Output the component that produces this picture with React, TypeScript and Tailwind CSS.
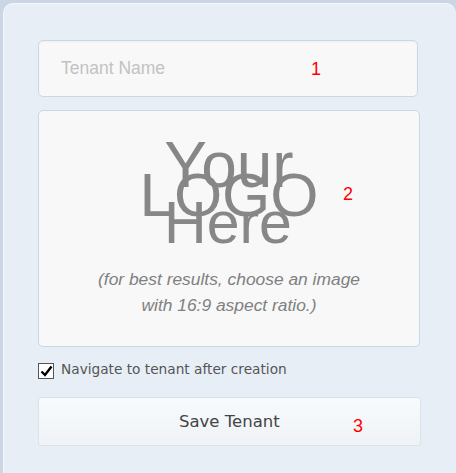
export default function App() {
  return (
    <div className="w-[456px] h-[473px] bg-[#cbd6e5] pt-[3px] pl-[3px] flex overflow-hidden">
      <div className="flex-1 rounded-t-[10px] bg-[#e7eef6] border-l border-t border-[#f4f7fb] pl-[34px] pt-[36px] flex flex-col">
        {/* Tenant name */}
        <div className="relative w-[380px] h-[57px] rounded-[5px] border border-[#c9d8e5] bg-[#f8f8f8] shadow-[inset_0_1px_2px_rgba(0,0,0,0.04)] flex items-center pl-[22px]">
          <span className="text-[17.5px] text-[#c2c2c2] font-['Liberation_Sans',Arial,sans-serif]">Tenant Name</span>
          <span className="absolute left-[272px] top-[15px] text-[18px] text-[#ff0000] font-['Liberation_Sans',Arial,sans-serif]">1</span>
        </div>

        {/* Logo */}
        <div className="relative mt-[13px] w-[382px] h-[237px] rounded-[5px] border border-[#c9d8e5] bg-[#f8f8f8] flex flex-col items-center">
          <div className="mt-[29px] flex flex-col items-center text-[#878787] font-['Liberation_Sans',Arial,sans-serif]">
            <span className="text-[64px] h-[30px] leading-[30px] mt-[10px]">Your</span>
            <span className="text-[62px] h-[30px] leading-[30px]">LOGO</span>
            <span className="text-[59px] h-[30px] leading-[30px] mt-[-2px] ml-[-2px]">Here</span>
          </div>
          <p className="mt-[28px] text-center text-[17.4px] italic leading-[26px] text-[#808080] font-['Liberation_Sans',Arial,sans-serif]">
            (for best results, choose an image
            <br />
            with 16:9 aspect ratio.)
          </p>
          <span className="absolute left-[304px] top-[70px] text-[18px] text-[#ff0000] font-['Liberation_Sans',Arial,sans-serif]">2</span>
        </div>

        {/* Navigate checkbox */}
        <label className="mt-[14px] flex items-start gap-[7px]">
          <span className="mt-[2px] w-[16px] h-[16px] border border-[#555] bg-white flex items-center justify-center">
            <svg width="13" height="12" viewBox="0 0 13 12">
              <path d="M1.5 6.5 L5 10 L11.5 1.5" fill="none" stroke="#000" strokeWidth="2.4" />
            </svg>
          </span>
          <span className="text-[13.7px] leading-[16px] text-[#555] font-['DejaVu_Sans',Verdana,sans-serif]">
            Navigate to tenant after creation
          </span>
        </label>

        {/* Save */}
        <button className="relative mt-[18px] w-[383px] h-[49px] rounded-[3px] border border-[#d9e1e9] bg-gradient-to-b from-[#f8fbfd] to-[#f0f3f6] text-[16.5px] text-[#444] font-['DejaVu_Sans',Verdana,sans-serif]">
          <span className="absolute left-[140px] top-[12px]">Save Tenant</span>
          <span className="absolute left-[314px] top-[15px] text-[18px] text-[#ff0000] font-['Liberation_Sans',Arial,sans-serif]">3</span>
        </button>
      </div>
    </div>
  );
}
